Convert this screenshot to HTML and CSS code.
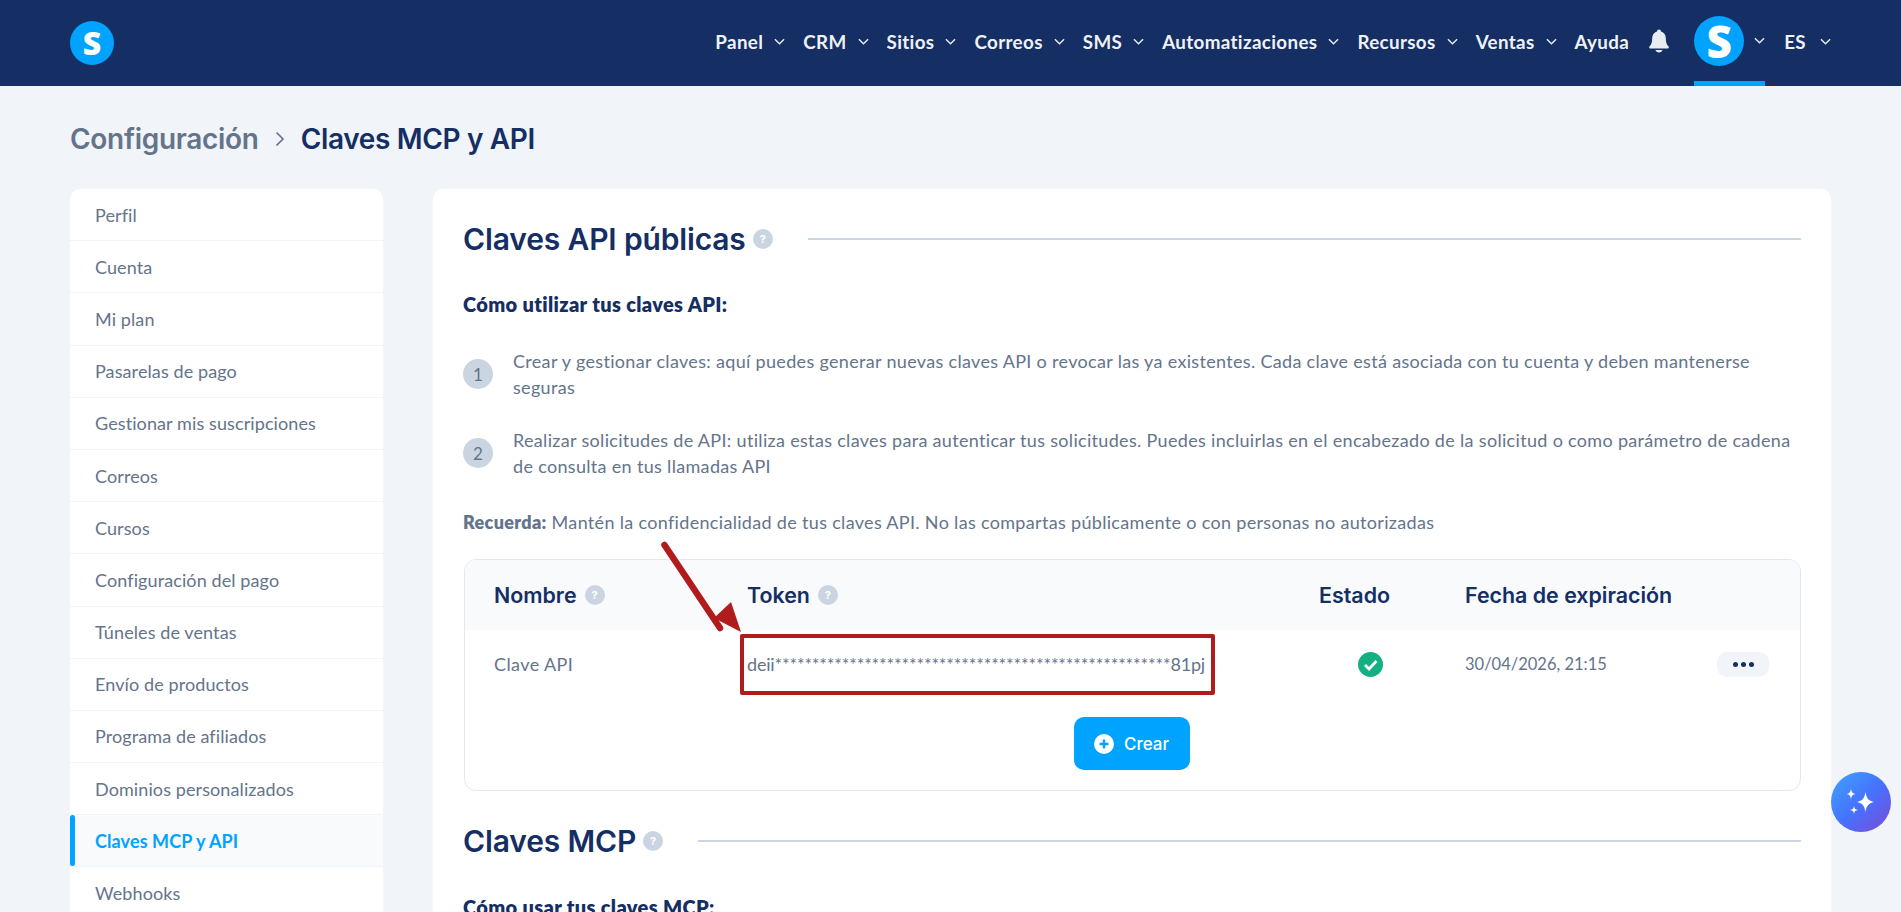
FILE: index.html
```html
<!DOCTYPE html>
<html lang="es">
<head>
<meta charset="utf-8">
<title>Claves MCP y API</title>
<link rel="stylesheet" href="styles.css">
</head>
<body>
<header class="topbar">
  <a class="logo"><span>S</span></a>
  <nav class="nav">
    <a class="nav-item">Panel<svg class="chev" viewBox="0 0 12 7"><path d="M1 1l5 5 5-5"/></svg></a>
    <a class="nav-item">CRM<svg class="chev" viewBox="0 0 12 7"><path d="M1 1l5 5 5-5"/></svg></a>
    <a class="nav-item">Sitios<svg class="chev" viewBox="0 0 12 7"><path d="M1 1l5 5 5-5"/></svg></a>
    <a class="nav-item">Correos<svg class="chev" viewBox="0 0 12 7"><path d="M1 1l5 5 5-5"/></svg></a>
    <a class="nav-item">SMS<svg class="chev" viewBox="0 0 12 7"><path d="M1 1l5 5 5-5"/></svg></a>
    <a class="nav-item">Automatizaciones<svg class="chev" viewBox="0 0 12 7"><path d="M1 1l5 5 5-5"/></svg></a>
    <a class="nav-item">Recursos<svg class="chev" viewBox="0 0 12 7"><path d="M1 1l5 5 5-5"/></svg></a>
    <a class="nav-item">Ventas<svg class="chev" viewBox="0 0 12 7"><path d="M1 1l5 5 5-5"/></svg></a>
    <a class="nav-item">Ayuda</a>
    <svg class="bell" viewBox="0 0 20 24"><path d="M10 0.500c-1.200 0-2 .8-2 1.900C4.900 3.300 3.200 6 3.200 9.300c0 4.200-.9 6.400-2.600 8-.7.700-.4 2.200.9 2.200h17c1.300 0 1.600-1.500.9-2.200-1.700-1.600-2.600-3.800-2.600-8 0-3.300-1.700-6-4.800-6.900 0-1.100-.8-1.900-2-1.900z"/><path d="M6.500 21h7c-.3 1.500-1.800 2.500-3.500 2.500S6.800 22.500 6.500 21z"/></svg>
    <a class="account"><span class="avatar"><span>S</span></span><svg class="chev" viewBox="0 0 12 7"><path d="M1 1l5 5 5-5"/></svg></a>
    <a class="nav-item lang">ES<svg class="chev" viewBox="0 0 12 7"><path d="M1 1l5 5 5-5"/></svg></a>
  </nav>
</header>

<div class="page">
  <div class="crumbs">
    <span class="crumb-parent">Configuración</span>
    <svg class="crumb-sep" viewBox="0 0 10 16"><path d="M1.500 1.500L8 8l-6.500 6.500"/></svg>
    <h1 class="crumb-current">Claves MCP y API</h1>
  </div>

  <div class="layout">
    <aside class="sidebar">
      <a class="side-item">Perfil</a>
      <a class="side-item">Cuenta</a>
      <a class="side-item">Mi plan</a>
      <a class="side-item">Pasarelas de pago</a>
      <a class="side-item">Gestionar mis suscripciones</a>
      <a class="side-item">Correos</a>
      <a class="side-item">Cursos</a>
      <a class="side-item">Configuración del pago</a>
      <a class="side-item">Túneles de ventas</a>
      <a class="side-item">Envío de productos</a>
      <a class="side-item">Programa de afiliados</a>
      <a class="side-item">Dominios personalizados</a>
      <a class="side-item active">Claves MCP y API</a>
      <a class="side-item">Webhooks</a>
    </aside>

    <main class="panel">
      <div class="section-head">
        <h2 class="section-title">Claves API públicas</h2>
        <span class="help">?</span>
        <span class="section-line"></span>
      </div>
      <h3 class="sub">Cómo utilizar tus claves API:</h3>

      <div class="step">
        <span class="step-num">1</span>
        <p class="step-text">Crear y gestionar claves: aquí puedes generar nuevas claves API o revocar las ya existentes. Cada clave está asociada con tu cuenta y deben mantenerse seguras</p>
      </div>
      <div class="step">
        <span class="step-num">2</span>
        <p class="step-text">Realizar solicitudes de API: utiliza estas claves para autenticar tus solicitudes. Puedes incluirlas en el encabezado de la solicitud o como parámetro de cadena de consulta en tus llamadas API</p>
      </div>
      <p class="note"><strong>Recuerda:</strong> Mantén la confidencialidad de tus claves API. No las compartas públicamente o con personas no autorizadas</p>

      <div class="table-box">
        <div class="row row-head">
          <div class="th">Nombre<span class="help small">?</span></div>
          <div class="th">Token<span class="help small">?</span></div>
          <div class="th">Estado</div>
          <div class="th">Fecha de expiración</div>
          <div></div>
        </div>
        <div class="row row-body">
          <div class="td name">Clave API</div>
          <div class="td token">deii*****************************************************81pj</div>
          <div class="td status"><svg class="check" viewBox="0 0 25 25"><circle cx="12.500" cy="12.500" r="12.500"/><path d="M7 13l4 4 7.500-8"/></svg></div>
          <div class="td date">30/04/2026, 21:15</div>
          <div class="td actions"><button class="more"><i></i><i></i><i></i></button></div>
        </div>
        <div class="table-foot">
          <button class="create"><svg class="plus" viewBox="0 0 20 20"><circle cx="10" cy="10" r="10"/><path d="M10 5.500v9M5.500 10h9"/></svg>Crear</button>
        </div>
      </div>

      <div class="section-head second">
        <h2 class="section-title">Claves MCP</h2>
        <span class="help">?</span>
        <span class="section-line"></span>
      </div>
      <h3 class="sub">Cómo usar tus claves MCP:</h3>
    </main>
  </div>
</div>

<svg class="annotation" viewBox="0 0 120 110" aria-hidden="true">
  <path class="arrow-line" d="M4.500 7L60 90"/>
  <path class="arrow-head" d="M81 94L71 64L54 80z"/>
</svg>
<div class="annotation-box"></div>

<button class="fab" aria-label="Asistente">
  <svg viewBox="0 0 60 60"><path d="M34.500 20c1 6 3 9 8.500 10-5.500 1-7.500 4-8.500 10-1-6-3-9-8.500-10 5.500-1 7.500-4 8.500-10z"/><path d="M20 17c.5 3.200 1.500 4.500 4.500 5-3 .5-4 1.800-4.500 5-.5-3.200-1.500-4.500-4.500-5 3-.5 4-1.800 4.500-5z"/><path d="M23 34c.4 2.800 1.300 3.600 4 4-2.700.4-3.600 1.200-4 4-.4-2.800-1.300-3.600-4-4 2.700-.4 3.600-1.200 4-4z"/></svg>
</button>
</body>
</html>
```
FILE: styles.css
```css
* { box-sizing: border-box; }
html, body { margin: 0; height: 912px; overflow: hidden; }
body { background: #f1f4f9; font-family: "Lato", "Liberation Sans", sans-serif; color: #64748b; position: relative; }
h1, h2, h3, p { margin: 0; }

.topbar { height: 86px; background: #152e63; display: flex; align-items: center; padding: 0 70px; }
.logo { width: 44px; height: 44px; border-radius: 50%; background: #00a3ff; display: flex; align-items: center; justify-content: center; color: #fff; }
.logo span { font: 800 32px/1 "Open Sans", sans-serif; }
.nav { margin-left: auto; display: flex; align-items: center; height: 86px; font-weight: 700; font-size: 18.800px; color: #eef2f7; }
.nav-item { display: flex; align-items: center; margin-right: 18px; padding-bottom: 4px; letter-spacing: .35px; white-space: nowrap; }
.chev { width: 11px; height: 7px; margin-left: 11px; fill: none; stroke: #e5eaf2; stroke-width: 1.600; }
.bell { width: 20px; height: 24px; fill: #e9edf2; margin: 0 25px 4px 2px; }
.account { display: flex; align-items: center; align-self: stretch; border-bottom: 5px solid #00a3ff; margin-right: 19px; }
.account .chev { margin-left: 10px; }
.avatar { width: 50px; height: 50px; border-radius: 50%; background: #00a3ff; color: #fff; display: flex; align-items: center; justify-content: center; }
.avatar span { font: 800 44px/1 "Open Sans", sans-serif; }
.lang { margin-right: 0; }
.lang .chev { margin-left: 14px; }

.page { padding: 0 70px; }
.crumbs { height: 103px; display: flex; align-items: center; gap: 12px; padding-top: 2px; }
.crumb-parent { font: 600 28px "Inter", sans-serif; color: #64748b; letter-spacing: -.3px; }
.crumb-sep { width: 10px; height: 16px; fill: none; stroke: #64748b; stroke-width: 1.700; margin: 0 4px; }
.crumb-current { font: 600 28px "Inter", sans-serif; color: #152e63; letter-spacing: -.35px; }

.layout { display: grid; grid-template-columns: 313px 1398px; gap: 50px; }
.sidebar { background: #fff; border-radius: 10px 10px 0 0; height: 760px; }
.side-item { display: flex; align-items: center; height: 52.200px; padding: 0 25px; font-size: 18px; letter-spacing: .1px; color: #64748b; border-bottom: 1px solid #f1f4f9; }
.side-item.active { background: #f8fafc; color: #00a3ff; font-weight: 700; position: relative; }
.side-item.active::before { content: ""; position: absolute; left: 0; top: 0; bottom: 0; width: 5px; background: #00a3ff; border-radius: 3px; }

.panel { background: #fff; border-radius: 10px 10px 0 0; padding: 30px; height: 760px; }
.section-head { display: flex; align-items: center; height: 40px; }
.section-title { font: 600 30px/40px "Inter", sans-serif; color: #152e63; letter-spacing: -.15px; }
.help { width: 20px; height: 20px; border-radius: 50%; background: #cbd5e1; color: #fff; font: 700 11px/20px "Inter", sans-serif; text-align: center; margin-left: 7px; flex: none; letter-spacing: 0; }
.section-line { flex: 1; height: 2px; background: #cbd5e1; margin-left: 35px; }
.sub { font-weight: 800; font-size: 20px; letter-spacing: .35px; line-height: 26px; color: #152e63; margin-top: 32px; }

.step { display: flex; align-items: center; gap: 20px; margin-top: 31px; }
.step + .step { margin-top: 27px; }
.step-num { width: 30px; height: 30px; border-radius: 50%; background: #cbd5e1; color: #64748b; font-size: 17px; display: flex; align-items: center; justify-content: center; flex: none; }
.step-text { font-size: 18px; letter-spacing: .32px; line-height: 26px; }
.note { font-size: 18px; letter-spacing: .32px; line-height: 26px; margin-top: 30px; }
.note strong { font-weight: 800; }

.table-box { margin-top: 24px; height: 232px; margin-left: 1px; border: 1.500px solid #e2e8f0; border-radius: 12px; overflow: hidden; }
.row { display: grid; grid-template-columns: 253px 572px 146px 252px 1fr; padding-left: 29px; align-items: center; }
.row-head { height: 70px; background: #f8fafc; }
.th { font: 600 21.400px "Inter", sans-serif; color: #152e63; display: flex; align-items: center; }
.help.small { margin-left: 8px; }
.row-body { height: 68px; }
.td { font: 400 18px "Lato", sans-serif; color: #64748b; }
.name { letter-spacing: .4px; }
.token { white-space: nowrap; letter-spacing: -.18px; }
.date { font: 400 16.500px "Liberation Sans Narrow", "Lato", sans-serif; }
.status { padding-left: 39px; }
.check { display: block; width: 25px; height: 25px; }
.check circle { fill: #14b083; }
.check path { fill: none; stroke: #fff; stroke-width: 2.800; }
.actions { display: flex; }
.more { width: 52px; height: 25px; border: 0; border-radius: 10px; background: #f1f4f9; display: flex; align-items: center; justify-content: center; gap: 3px; padding: 0; }
.more i { width: 5px; height: 5px; border-radius: 50%; background: #152e63; }
.table-foot { display: flex; justify-content: center; padding: 19px 2px 0 0; }
.create { width: 116px; height: 53px; border: 0; border-radius: 10px; background: #00a3ff; color: #fff; font: 500 17px "Inter", sans-serif; display: flex; align-items: center; justify-content: center; gap: 10px; padding: 0; }
.plus { width: 20px; height: 20px; }
.plus circle { fill: #fff; }
.plus path { stroke: #00a3ff; stroke-width: 2.400; fill: none; }

.second { margin-top: 30px; }
.second + .sub { margin-top: 33px; }

.annotation { position: absolute; left: 660px; top: 538px; width: 120px; height: 110px; overflow: visible; }
.arrow-line { stroke: #b01c1c; stroke-width: 6.500; stroke-linecap: round; fill: none; }
.arrow-head { fill: #b01c1c; }
.annotation-box { position: absolute; left: 740px; top: 634px; width: 475px; height: 61px; border: 4px solid #b01c1c; border-radius: 2px; }

.fab { position: fixed; left: 1831px; top: 772px; width: 60px; height: 60px; border: 0; border-radius: 50%; padding: 0; background: linear-gradient(135deg, #3fa4ff 0%, #4573ff 50%, #7a4bd6 100%); }
.fab svg { display: block; width: 60px; height: 60px; fill: #fff; }
```
